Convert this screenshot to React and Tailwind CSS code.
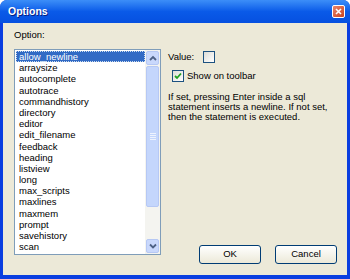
import React from "react";

const items = [
  "allow_newline","arraysize","autocomplete","autotrace","commandhistory","directory","editor","edit_filename","feedback","heading","listview","long","max_scripts","maxlines","maxmem","prompt","savehistory","scan",
];

function Arrow({ up }) {
  return (
    <svg width="8" height="6" viewBox="0 0 8 6">
      <path d={up ? "M1 5 L4 2 L7 5" : "M1 1.5 L4 4.5 L7 1.5"} stroke="#4d6185" strokeWidth="1.8" fill="none" />
    </svg>
  );
}

function Check({ checked, className = "" }) {
  return (
    <div className={"w-[12px] h-[12px] border border-[#1c5180] bg-gradient-to-br from-[#dcdcd7] to-white flex items-center justify-center " + className}>
      {checked && (
        <svg width="8" height="8" viewBox="0 0 8 8">
          <path d="M1 4 L3 6 L7 1.5" stroke="#21a121" strokeWidth="1.8" fill="none" />
        </svg>
      )}
    </div>
  );
}

function Btn({ children }) {
  return (
    <div className="w-[62px] h-[19px] rounded-[3px] border border-[#003c74] bg-gradient-to-b from-white to-[#ece9d8] flex items-center justify-center text-black text-[9.5px]">
      {children}
    </div>
  );
}

export default function App() {
  return (
    <div className="w-[350px] h-[279px] bg-[#0a3ee0] rounded-t-[7px] flex flex-col overflow-hidden" style={{ fontFamily: '"Liberation Sans", Arial, sans-serif' }}>
      <div className="h-[23px] shrink-0 bg-gradient-to-b from-[#3c8ef8] via-[#0a5ae8] to-[#0650e0] flex items-center justify-between pl-[8px] pr-[5px]">
        <span className="text-white font-bold text-[10.5px]" style={{ textShadow: "1px 1px #0a1e80" }}>Options</span>
        <div className="w-[13px] h-[13px] rounded-[2px] border border-white bg-gradient-to-br from-[#e8846a] to-[#c8421c] flex items-center justify-center">
          <svg width="7" height="7" viewBox="0 0 7 7">
            <path d="M1 1 L6 6 M6 1 L1 6" stroke="white" strokeWidth="1.6" />
          </svg>
        </div>
      </div>
      <div className="flex-1 mx-[3px] mb-[4px] bg-[#ece9d8] flex pl-[11px] pr-[10px] pt-[5px] text-[9.5px] text-black">
        <div className="w-[147px] flex flex-col">
          <div className="h-[21px] leading-[14px]">Option:</div>
          <div className="h-[206px] border border-[#7f9db9] bg-white flex">
            <div className="flex-1 flex flex-col pt-[1px] pl-[1px]">
              {items.map((it, i) => (
                <div
                  key={it}
                  className={
                    "h-[11.2px] leading-[11px] pl-[3px] whitespace-nowrap " +
                    (i === 0 ? "bg-[#316ac5] text-white outline outline-1 outline-dotted outline-[#cde] -outline-offset-1" : "")
                  }
                >
                  {it}
                </div>
              ))}
            </div>
            <div className="w-[15px] bg-[#f4f4f0] flex flex-col p-[1px] gap-[1px]">
              <div className="h-[14px] rounded-[2px] border border-[#b6c8f4] bg-[#c9d8fc] flex items-center justify-center"><Arrow up /></div>
              <div className="h-[141px] rounded-[2px] border border-[#b6c8f4] bg-[#c4d6fc] flex flex-col items-center justify-center gap-[1px]">
                <div className="w-[6px] h-[1px] bg-[#eef3fe]" />
                <div className="w-[6px] h-[1px] bg-[#eef3fe]" />
                <div className="w-[6px] h-[1px] bg-[#eef3fe]" />
                <div className="w-[6px] h-[1px] bg-[#eef3fe]" />
              </div>
              <div className="flex-1" />
              <div className="h-[14px] rounded-[2px] border border-[#b6c8f4] bg-[#c9d8fc] flex items-center justify-center"><Arrow /></div>
            </div>
          </div>
        </div>
        <div className="flex-1 flex flex-col pl-[7px] pt-[23px]">
          <div className="flex items-center h-[12px]">
            <span className="w-[35px]">Value:</span>
            <Check />
          </div>
          <div className="flex items-center h-[12px] mt-[7px] pl-[4px]">
            <Check checked />
            <span className="ml-[3px]">Show on toolbar</span>
          </div>
          <div className="mt-[10px] leading-[10px] whitespace-nowrap">
            If set, pressing Enter inside a sql<br />
            statement inserts a newline. If not set,<br />
            then the statement is executed.
          </div>
          <div className="flex-1" />
          <div className="flex justify-end gap-[14px] mb-[11px]">
            <Btn>OK</Btn>
            <Btn>Cancel</Btn>
          </div>
        </div>
      </div>
    </div>
  );
}
